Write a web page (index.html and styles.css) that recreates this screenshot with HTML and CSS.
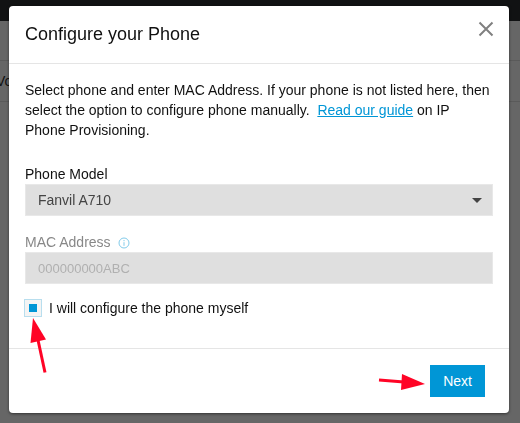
FILE: index.html
```html
<!DOCTYPE html>
<html lang="en">
<head>
  <meta charset="UTF-8" />
  <meta name="viewport" content="width=device-width, initial-scale=1.0"/>
  <title>Configure your Phone</title>
  <link rel="stylesheet" href="styles.css">
</head>
<body>

<header class="topbar"></header>
<main class="page">
  <div class="page-toolbar"></div>
  <div class="page-row">Vo</div>
</main>

<div class="overlay">
  <form class="modal" role="dialog" aria-labelledby="modalTitle">
    <div class="modal-header">
      <h1 id="modalTitle">Configure your Phone</h1>
      <button type="button" class="close" aria-label="Close">
        <svg width="16" height="16" viewBox="0 0 16 16" fill="none" stroke="#808080" stroke-width="2">
          <path d="M1.500 1.500l13 13M14.500 1.500l-13 13"/>
        </svg>
      </button>
    </div>

    <div class="modal-body">
      <p class="intro">Select phone and enter MAC Address. If your phone is not listed here, then select the option to configure phone manually.&nbsp; <a href="#guide">Read our guide</a> on IP Phone Provisioning.</p>

      <div class="field">
        <label for="model">Phone Model</label>
        <div class="select-wrap">
          <select id="model">
            <option>Fanvil A710</option>
          </select>
          <svg class="caret" width="10" height="5" viewBox="0 0 10 5"><path d="M0 0h10L5 5z" fill="#444"/></svg>
        </div>
      </div>

      <div class="field disabled">
        <label for="mac">MAC Address
          <svg class="info" width="12" height="12" viewBox="0 0 12 12" fill="none" stroke="#82cbea">
            <circle cx="6" cy="6" r="5"/>
            <path d="M6 5.200v3.600M6 3v1.200"/>
          </svg>
        </label>
        <input type="text" id="mac" placeholder="000000000ABC" disabled />
      </div>

      <div class="check">
        <input type="checkbox" id="manual" checked />
        <label for="manual">I will configure the phone myself</label>
        <svg class="arrow arrow-check" width="18" height="56" viewBox="0 0 18 56">
          <path d="M9 22L16 54.500" stroke="#ff0426" stroke-width="3"/>
          <path d="M4 0L17 21.500L1.500 25z" fill="#ff0426"/>
        </svg>
      </div>
    </div>

    <div class="modal-footer">
      <div class="next-wrap">
        <svg class="arrow arrow-next" width="48" height="18" viewBox="0 0 48 18">
          <path d="M1 7L26 9" stroke="#ff0426" stroke-width="3"/>
          <path d="M47 11L24 1L23 17z" fill="#ff0426"/>
        </svg>
        <button type="submit" class="next">Next</button>
      </div>
    </div>
  </form>
</div>

</body>
</html>
```
FILE: styles.css
```css
* {
  box-sizing: border-box;
}

body {
  margin: 0;
  min-height: 100vh;
  font-family: "Liberation Sans", Arial, sans-serif;
  font-size: 14px;
  line-height: 20px;
  color: #111;
  background: #666;
}

/* page behind the dialog */
.topbar {
  height: 21px;
  background: #111213;
}

.page-toolbar {
  height: 40px;
  border-bottom: 1px solid #5a5a5a;
}

.page-row {
  padding: 10px 0;
  border-bottom: 1px solid #5a5a5a;
  text-indent: -4px;
}

.overlay {
  position: fixed;
  inset: 0;
  padding: 6px 11px 10px 9px;
}

.modal {
  background: #fff;
  border-radius: 4px;
  box-shadow: 0 1px 3px rgba(0, 0, 0, 0.5);
}

.modal-header {
  display: flex;
  justify-content: space-between;
  align-items: flex-start;
  padding: 15px;
  padding-left: 16px;
  border-bottom: 1px solid #e5e5e5;
}

.modal-header h1 {
  margin: 0;
  font-size: 18px;
  font-weight: normal;
  line-height: 27px;
}

.close {
  display: block;
  padding: 0;
  border: 0;
  background: none;
  cursor: pointer;
}

.close svg {
  display: block;
}

.modal-body {
  padding: 16px;
  padding-bottom: 30px;
}

.intro {
  margin: 0 0 24px;
}

a {
  color: #0096d6;
}

.field {
  margin-bottom: 16px;
}

.field label {
  display: block;
}

.field.disabled {
  margin-bottom: 14px;
}

.field.disabled label {
  color: #888;
}

.info {
  margin-left: 4px;
  vertical-align: -2px;
}

.select-wrap {
  position: relative;
}

.field select,
.field input {
  display: block;
  width: 100%;
  height: 32px;
  padding: 0 12px;
  border: 1px solid #e8e8e8;
  border-radius: 0;
  background: #dfdfdf;
  font-family: inherit;
  font-size: 14px;
  color: #444;
  appearance: none;
}

.field input {
  font-size: 13px;
}

.field input::placeholder {
  color: #b0b0b0;
}

.caret {
  position: absolute;
  right: 11px;
  top: 14px;
  pointer-events: none;
}

.check {
  position: relative;
  display: flex;
  align-items: center;
  gap: 7px;
}

.check input {
  appearance: none;
  width: 18px;
  height: 18px;
  margin: 0 0 0 -1px;
  border: 1px solid #b8deee;
  background: #f4f4f4;
  display: grid;
  place-items: center;
}

.check input:checked::before {
  content: "";
  width: 8px;
  height: 8px;
  background: #0096d6;
}

.modal-footer {
  display: flex;
  justify-content: flex-end;
  padding: 16px 24px;
  border-top: 1px solid #e5e5e5;
}

.next-wrap {
  position: relative;
}

.next {
  display: block;
  height: 32px;
  padding: 0 13px;
  border: 0;
  background: #0096d6;
  color: #fff;
  font-family: inherit;
  font-size: 14px;
  cursor: pointer;
}

/* pointers drawn over the dialog */
.arrow {
  position: absolute;
  pointer-events: none;
}

.arrow-check {
  left: 4px;
  top: 20px;
}

.arrow-next {
  right: 59px;
  top: 8px;
}
```
